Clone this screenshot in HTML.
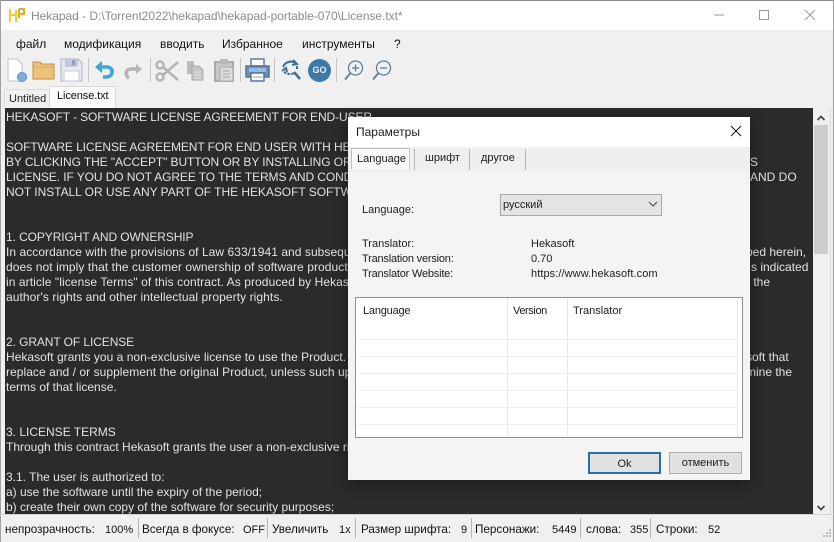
<!DOCTYPE html>
<html><head><meta charset="utf-8">
<style>
html,body{margin:0;padding:0}
body{width:834px;height:542px;overflow:hidden;position:relative;background:#f0f0f0;font-family:"Liberation Sans",sans-serif;font-size:12px;color:#1a1a1a}
.a{position:absolute;white-space:nowrap}
#ed{position:absolute;left:5px;top:108px;width:808px;height:406px;background:#2b2b2b;overflow:hidden}
#ed div{position:absolute;white-space:nowrap;color:#e2e2e2;font-size:12px;line-height:19px;height:19px}
.u{letter-spacing:-.09px}
.l{letter-spacing:.08px}
.m{top:37px;font-size:12px;color:#111}
.st{top:523px;font-size:11.700px;color:#111}
.n{font-size:11px;top:524px}
.sep{position:absolute;top:518px;width:1px;height:20px;background:#b4b4b4}
.tb{position:absolute;top:58px;width:1px;height:24px;background:#c4c4c4}
svg{position:absolute;overflow:visible}
.d{color:#1c1c1c;font-size:11px;line-height:14px}
</style></head><body>
<div class="a" style="left:0;top:0;width:834px;height:30px;background:#fff"></div>
<div class="a" style="left:0;top:0;width:834px;height:1px;background:#8a8a8a"></div>
<div class="a" style="left:0;top:0;width:1px;height:542px;background:#a0a0a0"></div>
<div class="a" style="right:0;top:0;width:1px;height:542px;background:#a0a0a0"></div>
<svg style="left:9px;top:8px" width="17" height="15"><path d="M1 1V14M1 7H7M7 2V14" stroke="#f2c744" stroke-width="2" fill="none"/><path d="M10 1V10M10 1H15V6H10" stroke="#e6a92c" stroke-width="2" fill="none"/></svg>
<div class="a" style="left:31px;top:9px;font-size:12px;letter-spacing:-.03px;color:#8b8b8b">Hekapad - D:\Torrent2022\hekapad\hekapad-portable-070\License.txt*</div>
<svg style="left:714px;top:9px" width="110" height="12"><path d="M0 6H10" stroke="#999"/><path d="M45.500 1.500H54.500V10.500H45.500Z" stroke="#999" fill="none"/><path d="M91 1L101 11M101 1L91 11" stroke="#999" fill="none"/></svg>

<div class="a m" style="left:16px">файл</div>
<div class="a m" style="left:64px">модификация</div>
<div class="a m" style="left:160px">вводить</div>
<div class="a m" style="left:222px">Избранное</div>
<div class="a m" style="left:302px">инструменты</div>
<div class="a m" style="left:394px">?</div>

<!-- toolbar -->
<svg style="left:7px;top:58px" width="20" height="24"><path d="M1 1H10L15 6V23H1Z" fill="#fff" stroke="#b9c4d2"/><circle cx="15" cy="19" r="4.500" fill="#7fb0dc" stroke="#5a8fbe"/></svg>
<svg style="left:32px;top:60px" width="24" height="20"><path d="M1 19V2H8L10 4H22V19Z" fill="#efc27a" stroke="#b88f4e"/><path d="M1 7H22" stroke="#d9a95f"/></svg>
<svg style="left:60px;top:58px" width="23" height="24"><path d="M1 1H18L22 5V23H1Z" fill="#e6e9f2" stroke="#aab3cc"/><path d="M6 1V8H17V1" fill="#c4cade" stroke="#aab3cc"/><path d="M12 2V7H15V2Z" fill="#8f99b8"/><path d="M4 13H19V23H4Z" fill="#fff" stroke="#c3c9da"/></svg>
<div class="tb" style="left:88px"></div>
<svg style="left:95px;top:60px" width="20" height="20"><path d="M3 7H12C19 7 19 17 11 17H8" fill="none" stroke="#3fa6d6" stroke-width="3.600"/><path d="M0 7L7 1V13Z" fill="#3fa6d6"/></svg>
<svg style="left:123px;top:62px" width="20" height="18"><path d="M16 7H8C2 7 2 14 6 16" fill="none" stroke="#b5b5b5" stroke-width="3.600"/><path d="M19 7L13 2V12Z" fill="#b5b5b5"/></svg>
<div class="tb" style="left:150px"></div>
<svg style="left:155px;top:60px" width="24" height="22" fill="none" stroke="#b4b4b4" stroke-width="2.500"><circle cx="5" cy="5" r="3.500"/><circle cx="5" cy="17" r="3.500"/><path d="M8 7L23 20M8 15L23 2"/></svg>
<svg style="left:186px;top:60px" width="18" height="21"><path d="M1 1H8V14H1Z" fill="#bbb"/><path d="M6 6H13L17 10V20H6Z" fill="#c6c6c6" stroke="#aaa"/><path d="M8 12H15M8 15H15M8 18H15" stroke="#e2e2e2"/></svg>
<svg style="left:213px;top:58px" width="22" height="24"><path d="M2 4H20V23H2Z" fill="#c8c8c8" stroke="#aaa" stroke-width="2"/><path d="M7 1H15V6H7Z" fill="#bbb"/><path d="M7 9H20V23H7Z" fill="#dcdcdc" stroke="#aaa"/><path d="M10 13H17M10 16H17M10 19H17" stroke="#a8a8a8"/></svg>
<div class="tb" style="left:240px"></div>
<svg style="left:245px;top:58px" width="25" height="24"><path d="M6 1H19V8H6Z" fill="#fff" stroke="#65789a" stroke-width="1.500"/><path d="M1 8H24V19H1Z" fill="#6e8ebd" stroke="#5e7294" stroke-width="1.500"/><path d="M4 10H21V14H4Z" fill="#8fbbe8"/><path d="M6 15H19V23H6Z" fill="#fff" stroke="#5e7294" stroke-width="1.500"/><path d="M8 19H17" stroke="#8aa"/></svg>
<div class="tb" style="left:274px"></div>
<svg style="left:280px;top:59px" width="21" height="21" fill="none" stroke="#3d6f94" stroke-width="2"><path d="M3 8C5 3 11 1 16 4"/><path d="M13 1L17 5L12 6"/><path d="M2 12L6 9L7 13" /><path d="M14 14C11 16 7 15 4 13" stroke-dasharray="3 1"/><path d="M14 13L20 20" stroke-width="2.500"/><path d="M17 7V10" /></svg>
<div class="a" style="left:308px;top:59px;width:23px;height:23px;border-radius:50%;background:#3e78a9;color:#e8f0f6;font-size:9px;font-weight:bold;line-height:23px;text-align:center">GO</div>
<div class="tb" style="left:336px"></div>
<svg style="left:344px;top:60px" width="20" height="21" fill="none" stroke="#5e7f99" stroke-width="1.300"><circle cx="11.500" cy="8" r="7"/><path d="M6.500 13L1 19.500" stroke-width="1.800"/><path d="M8 8H15M11.500 4.500V11.500" stroke="#5e7f99"/></svg>
<svg style="left:372px;top:60px" width="20" height="21" fill="none" stroke="#5e7f99" stroke-width="1.300"><circle cx="11.500" cy="8" r="7"/><path d="M6.500 13L1 19.500" stroke-width="1.800"/><path d="M8 8H15"/></svg>

<!-- tabs -->
<div class="a" style="left:4px;top:89px;width:45px;height:17px;background:#f0f0f0;border:1px solid #dadada;border-bottom:none"></div>
<div class="a" style="left:9px;top:93px;color:#222;font-size:11px">Untitled</div>
<div class="a" style="left:49px;top:86px;width:65px;height:21px;background:#fafafa;border:1px solid #d8d8d8;border-bottom:none"></div>
<div class="a" style="left:57px;top:90px;color:#111;font-size:11px;letter-spacing:-.1px">License.txt</div>

<!-- editor -->
<div id="ed">
<div class="u" style="left:1px;top:0">HEKASOFT - SOFTWARE LICENSE AGREEMENT FOR END-USER</div>
<div class="u" style="left:1px;top:30px">SOFTWARE LICENSE AGREEMENT FOR END USER WITH HEKASOFT</div>
<div class="u" style="left:1px;top:45px">BY CLICKING THE "ACCEPT" BUTTON OR BY INSTALLING OR USING THE SOFTWARE</div>
<div class="u" style="left:1px;top:60px">LICENSE. IF YOU DO NOT AGREE TO THE TERMS AND CONDITIONS OF THIS AGREEMENT</div>
<div style="left:1px;top:75px;letter-spacing:-.04px">NOT INSTALL OR USE ANY PART OF THE HEKASOFT SOFTWARE</div>
<div class="u" style="left:1px;top:120px">1. COPYRIGHT AND OWNERSHIP</div>
<div style="left:1px;top:135px;letter-spacing:.05px">In accordance with the provisions of Law 633/1941 and subsequent amendments</div>
<div class="l" style="left:1px;top:150px">does not imply that the customer ownership of software products</div>
<div class="l" style="left:1px;top:165px">in article "license Terms" of this contract. As produced by Hekasoft</div>
<div class="l" style="left:1px;top:180px">author's rights and other intellectual property rights.</div>
<div class="u" style="left:1px;top:225px">2. GRANT OF LICENSE</div>
<div style="left:1px;top:240px;letter-spacing:.03px">Hekasoft grants you a non-exclusive license to use the Product. The terms</div>
<div style="left:1px;top:255px;letter-spacing:.05px">replace and / or supplement the original Product, unless such updates</div>
<div style="left:1px;top:270px">terms of that license.</div>
<div style="left:1px;top:315px">3. LICENSE TERMS</div>
<div style="left:1px;top:330px">Through this contract Hekasoft grants the user a non-exclusive right</div>
<div style="left:1px;top:360px">3.1. The user is authorized to:</div>
<div style="left:1px;top:375px">a) use the software until the expiry of the period;</div>
<div style="left:1px;top:390px">b) create their own copy of the software for security purposes;</div>
<div style="left:745px;top:45px">S</div>
<div style="left:745px;top:60px">AND DO</div>
<div style="left:741px;top:135px">bed herein,</div>
<div style="left:746px;top:150px">s indicated</div>
<div style="left:741px;top:165px">r the</div>
<div style="left:741px;top:240px">soft that</div>
<div style="left:741px;top:255px">mine the</div>
</div>

<!-- scrollbar -->
<div class="a" style="left:813px;top:108px;width:16px;height:406px;background:#f0f0f0"></div>
<svg style="left:816px;top:114px" width="10" height="7"><path d="M1.500 6L5 2.500L8.500 6" stroke="#444" stroke-width="1.700" fill="none"/></svg>
<div class="a" style="left:814px;top:125px;width:14px;height:129px;background:#cdcdcd"></div>
<svg style="left:816px;top:505px" width="10" height="7"><path d="M1.500 1L5 4.500L8.500 1" stroke="#444" stroke-width="1.700" fill="none"/></svg>
<div class="a" style="left:830px;top:108px;width:1px;height:406px;background:#dcdcdc"></div>

<!-- status bar -->
<div class="a" style="left:0;top:514px;width:834px;height:1px;background:#d4d4d4"></div>
<div class="a st" style="left:5px">непрозрачность:</div><div class="a st n" style="left:105px">100%</div>
<div class="sep" style="left:138px"></div>
<div class="a st" style="left:142px">Всегда в фокусе:</div><div class="a st n" style="left:243px">OFF</div>
<div class="sep" style="left:267px"></div>
<div class="a st" style="left:272px">Увеличить</div><div class="a st n" style="left:339px">1x</div>
<div class="sep" style="left:355px"></div>
<div class="a st" style="left:361px">Размер шрифта:</div><div class="a st n" style="left:461px">9</div>
<div class="sep" style="left:471px"></div>
<div class="a st" style="left:475px">Персонажи:</div><div class="a st n" style="left:552px">5449</div>
<div class="sep" style="left:580px"></div>
<div class="a st" style="left:586px">слова:</div><div class="a st n" style="left:630px">355</div>
<div class="sep" style="left:650px"></div>
<div class="a st" style="left:656px">Строки:</div><div class="a st n" style="left:708px">52</div>
<svg style="left:822px;top:528px" width="10" height="10"><path d="M7 1h2v2h-2zM4 4h2v2h-2zM7 4h2v2h-2zM1 7h2v2h-2zM4 7h2v2h-2zM7 7h2v2h-2z" fill="#bbb"/></svg>

<!-- dialog shadow -->
<div class="a" style="left:348px;top:117px;width:402px;height:363px;box-shadow:0 2px 14px rgba(0,0,0,.45)"></div>
<!-- dialog -->
<div class="a" style="left:348px;top:117px;width:402px;height:363px;background:#f4f4f4;overflow:hidden" id="dlg">
<div class="a" style="left:0;top:0;width:402px;height:30px;background:#fff"></div>
<div class="a" style="left:8px;top:8px;font-size:12px;color:#1c1c1c">Параметры</div>
<svg style="left:382px;top:8px" width="12" height="12"><path d="M1 1L11 11M11 1L1 11" stroke="#111" fill="none"/></svg>
<div class="a" style="left:0;top:30px;width:402px;height:25px;background:#efefef"></div>
<div class="a" style="left:3px;top:31px;width:57px;height:20px;background:#f8f8f8;border:1px solid #c0c0c0;border-right-color:#c8c8c8;border-bottom:none"></div>
<div class="a d" style="left:9px;top:35px">Language</div>
<div class="a" style="left:66px;top:32px;width:1px;height:21px;background:#b4b4b4"></div>
<div class="a d" style="left:77px;top:34px">шрифт</div>
<div class="a" style="left:121px;top:32px;width:1px;height:21px;background:#b4b4b4"></div>
<div class="a d" style="left:133px;top:34px">другое</div>
<div class="a" style="left:177px;top:32px;width:1px;height:21px;background:#b4b4b4"></div>

<div class="a d" style="left:14px;top:86px">Language:</div>
<div class="a" style="left:152px;top:77px;width:160px;height:20px;background:#e4e4e4;border:1px solid #a8a8a8"></div>
<div class="a d" style="left:155px;top:81px">русский</div>
<svg style="left:300px;top:84px" width="10" height="7"><path d="M1 1L5 5L9 1" stroke="#444" fill="none"/></svg>

<div class="a d" style="left:14px;top:120px">Translator:</div>
<div class="a d" style="left:183px;top:120px">Hekasoft</div>
<div class="a d" style="left:14px;top:135px;letter-spacing:-.2px">Translation version:</div>
<div class="a d" style="left:183px;top:135px">0.70</div>
<div class="a d" style="left:14px;top:150px;letter-spacing:-.2px">Translator Website:</div>
<div class="a d" style="left:183px;top:150px;letter-spacing:.08px">https://www.hekasoft.com</div>

<!-- list -->
<div class="a" style="left:7px;top:180px;width:386px;height:139px;background:#fff;border:1px solid #8f8f8f;overflow:hidden">
<div class="a d" style="left:7px;top:6px;letter-spacing:-.2px">Language</div>
<div class="a d" style="left:157px;top:6px;letter-spacing:-.4px">Version</div>
<div class="a d" style="left:217px;top:6px">Translator</div>
<div class="a" style="left:151px;top:0;width:1px;height:139px;background:#e8e8e8"></div>
<div class="a" style="left:211px;top:0;width:1px;height:139px;background:#e8e8e8"></div>
<div class="a" style="left:381px;top:0;width:1px;height:139px;background:#e8e8e8"></div>
<div class="a" style="left:2px;top:41px;width:380px;height:1px;background:#efefef"></div>
<div class="a" style="left:2px;top:58px;width:380px;height:1px;background:#efefef"></div>
<div class="a" style="left:2px;top:75px;width:380px;height:1px;background:#efefef"></div>
<div class="a" style="left:2px;top:92px;width:380px;height:1px;background:#efefef"></div>
<div class="a" style="left:2px;top:109px;width:380px;height:1px;background:#efefef"></div>
<div class="a" style="left:2px;top:126px;width:380px;height:1px;background:#efefef"></div>
</div>

<div class="a d" style="left:240px;top:335px;width:69px;height:18px;background:#e1e1e1;border:2px solid #2a6ea6;text-align:center;line-height:20px">Ok</div>
<div class="a d" style="left:321px;top:335px;width:71px;height:20px;background:#e1e1e1;border:1px solid #adadad;text-align:center;line-height:20px">отменить</div>
</div>
</body></html>
